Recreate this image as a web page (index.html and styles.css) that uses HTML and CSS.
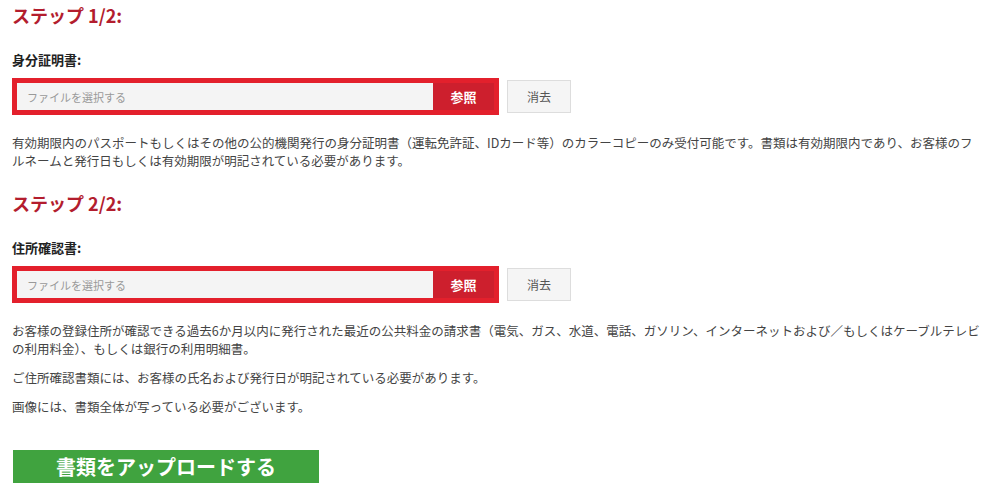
FILE: index.html
```html
<!DOCTYPE html>
<html lang="ja">
  <head>
    <meta charset="UTF-8" />
    <meta name="viewport" content="width=device-width, initial-scale=1.0" />
    <title>書類アップロード</title>
    <link rel="stylesheet" href="styles.css">
  </head>
  <body>
    <form class="container" onsubmit="return false">
      <section class="step">
        <h2>ステップ 1/2:</h2>
        <label class="field-label">身分証明書:</label>
        <div class="upload-row">
          <div class="file-box">
            <input type="text" class="file-name" placeholder="ファイルを選択する" readonly />
            <button type="button" class="browse-button">参照</button>
          </div>
          <button type="button" class="clear-button">消去</button>
        </div>
        <div class="notes">
          <p>有効期限内のパスポートもしくはその他の公的機関発行の身分証明書（運転免許証、IDカード等）のカラーコピーのみ受付可能です。書類は有効期限内であり、お客様のフルネームと発行日もしくは有効期限が明記されている必要があります。</p>
        </div>
      </section>

      <section class="step">
        <h2>ステップ 2/2:</h2>
        <label class="field-label">住所確認書:</label>
        <div class="upload-row">
          <div class="file-box">
            <input type="text" class="file-name" placeholder="ファイルを選択する" readonly />
            <button type="button" class="browse-button">参照</button>
          </div>
          <button type="button" class="clear-button">消去</button>
        </div>
        <div class="notes">
          <p>お客様の登録住所が確認できる過去6か月以内に発行された最近の公共料金の請求書（電気、ガス、水道、電話、ガソリン、インターネットおよび／もしくはケーブルテレビの利用料金）、もしくは銀行の利用明細書。</p>
          <p>ご住所確認書類には、お客様の氏名および発行日が明記されている必要があります。</p>
          <p>画像には、書類全体が写っている必要がございます。</p>
        </div>
      </section>

      <button type="submit" class="upload-button">書類をアップロードする</button>
    </form>
  </body>
</html>
```

FILE: styles.css
```css
* {
  margin: 0;
  padding: 0;
  box-sizing: border-box;
}

body {
  font-family: "Noto Sans CJK JP", "Noto Sans", sans-serif;
  color: #444;
  background-color: #fff;
  padding: 3px 16px 0 12px;
}

.container {
  display: flex;
  flex-direction: column;
  align-items: flex-start;
}

.step {
  width: 100%;
}

.step + .step {
  margin-top: 21px;
}

h2 {
  color: #b31d2e;
  font-size: 18px;
  line-height: 24px;
  font-weight: bold;
  margin-bottom: 24px;
}

.field-label {
  display: block;
  color: #222;
  font-size: 13px;
  line-height: 18px;
  font-weight: bold;
  margin-bottom: 9px;
}

.upload-row {
  display: flex;
  align-items: center;
  gap: 8px;
}

.file-box {
  display: flex;
  width: 487px;
  height: 37px;
  border: 5px solid #e3202c;
}

.file-name {
  flex: 1;
  border: none;
  outline: none;
  background-color: #f4f4f4;
  padding: 0 10px;
  font-family: inherit;
  font-size: 11px;
  color: #333;
}

.file-name::placeholder {
  color: #999;
}

.browse-button {
  width: 61px;
  border: none;
  background-color: #cd1f2d;
  color: #fff;
  font-family: inherit;
  font-size: 13px;
  font-weight: bold;
  cursor: pointer;
}

.clear-button {
  width: 64px;
  height: 33px;
  border: 1px solid #ddd;
  background-color: #f5f5f5;
  color: #555;
  font-family: inherit;
  font-size: 12px;
  cursor: pointer;
}

.notes {
  margin-top: 19px;
}

.notes p {
  font-size: 12.5px;
  line-height: 18px;
}

.notes p + p {
  margin-top: 11px;
}

.upload-button {
  margin-top: 34px;
  margin-left: 1px;
  width: 306px;
  height: 33px;
  border: none;
  background-color: #40a33f;
  color: #fff;
  font-family: inherit;
  font-size: 20px;
  font-weight: bold;
  cursor: pointer;
}
```
